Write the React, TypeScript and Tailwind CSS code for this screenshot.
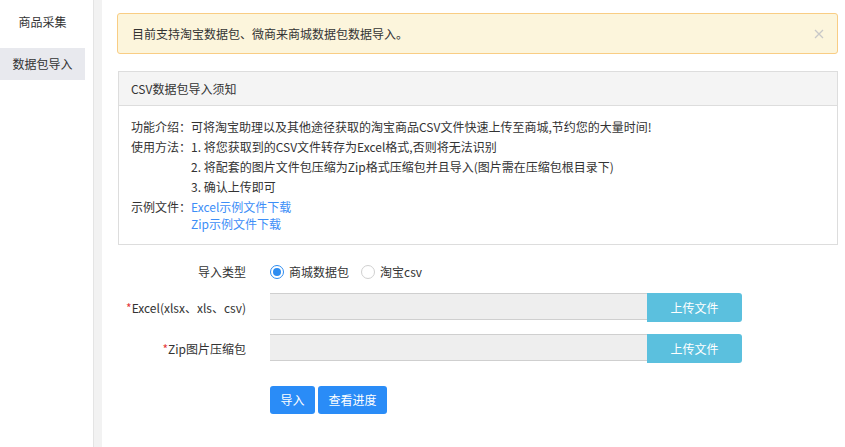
import React from "react";

export default function App() {
  const font = { fontFamily: '"Noto Sans CJK SC", "Noto Sans", sans-serif' };
  return (
    <div className="flex h-[447px] w-[845px] bg-white text-[12px] text-[#333]" style={font}>
      {/* sidebar */}
      <div className="w-[93px] shrink-0 bg-white">
        <div className="flex h-[44px] w-[85px] items-center justify-center">商品采集</div>
        <div className="mt-[4px] flex h-[32px] w-[85px] items-center justify-center bg-[#e8e9ee]">数据包导入</div>
      </div>
      <div className="w-[9px] shrink-0 border-l border-[#e4e4e4] bg-[#f2f2f2]" />
      {/* main */}
      <div className="flex-1 pl-[15px] pr-[7px] pt-[13px]">
        <div className="flex h-[41px] items-center justify-between rounded-[3px] border border-[#f9cd84] bg-[#fcf5dc] pl-[14px] pr-[13px]">
          <span>目前支持淘宝数据包、微商来商城数据包数据导入。</span>
          <svg width="10" height="10" viewBox="0 0 10 10" className="text-[#c8c8c8]">
            <path d="M1 1 L9 9 M9 1 L1 9" stroke="currentColor" strokeWidth="1.3" />
          </svg>
        </div>

        <div className="ml-[1px] mt-[17px] border border-[#ddd]">
          <div className="flex h-[34px] items-center border-b border-[#ddd] bg-[#f4f4f4] pl-[12px]">CSV数据包导入须知</div>
          <div className="pb-[12px] pl-[12px] pt-[11px] leading-[20px]">
            <div className="flex">
              <span className="w-[60px] shrink-0">功能介绍：</span>
              <span>可将淘宝助理以及其他途径获取的淘宝商品CSV文件快速上传至商城,节约您的大量时间!</span>
            </div>
            <div className="flex">
              <span className="w-[60px] shrink-0">使用方法：</span>
              <div>
                <div>1. 将您获取到的CSV文件转存为Excel格式,否则将无法识别</div>
                <div>2. 将配套的图片文件包压缩为Zip格式压缩包并且导入(图片需在压缩包根目录下)</div>
                <div>3. 确认上传即可</div>
              </div>
            </div>
            <div className="flex leading-[17px] mt-[1px]">
              <span className="w-[60px] shrink-0">示例文件：</span>
              <div className="text-[#3d8ef7]">
                <div>Excel示例文件下载</div>
                <div>Zip示例文件下载</div>
              </div>
            </div>
          </div>
        </div>

        {/* form */}
        <div className="mt-[17px] flex h-[20px] items-center">
          <div className="w-[129px] shrink-0 text-right">导入类型</div>
          <div className="ml-[24px] flex items-center">
            <span className="flex h-[14px] w-[14px] items-center justify-center rounded-full border border-[#2d8cf0] bg-white">
              <span className="h-[8px] w-[8px] rounded-full bg-[#2d8cf0]" />
            </span>
            <span className="ml-[5px]">商城数据包</span>
            <span className="ml-[12px] h-[14px] w-[14px] rounded-full border border-[#d0d0d0] bg-white" />
            <span className="ml-[5px]">淘宝csv</span>
          </div>
        </div>

        <div className="mt-[11px] flex items-start">
          <div className="flex h-[29px] w-[129px] shrink-0 items-center justify-end">
            <span className="text-[#e4393c]">*</span>Excel(xlsx、xls、csv)
          </div>
          <div className="ml-[24px] flex items-start">
            <div className="h-[27px] w-[377px] border-y border-[#cfcfcf] bg-[#eeeeee]" />
            <button className="flex h-[29px] w-[95px] items-center justify-center rounded-r-[3px] bg-[#5bc0de] text-white">上传文件</button>
          </div>
        </div>

        <div className="mt-[12px] flex items-start">
          <div className="flex h-[29px] w-[129px] shrink-0 items-center justify-end">
            <span className="text-[#e4393c]">*</span>Zip图片压缩包
          </div>
          <div className="ml-[24px] flex items-start">
            <div className="h-[27px] w-[377px] border-y border-[#cfcfcf] bg-[#eeeeee]" />
            <button className="flex h-[29px] w-[95px] items-center justify-center rounded-r-[3px] bg-[#5bc0de] text-white">上传文件</button>
          </div>
        </div>

        <div className="ml-[153px] mt-[23px] flex gap-[3px]">
          <button className="flex h-[28px] w-[45px] items-center justify-center rounded-[3px] bg-[#2a8cf7] text-white">导入</button>
          <button className="flex h-[28px] w-[69px] items-center justify-center rounded-[3px] bg-[#2a8cf7] text-white">查看进度</button>
        </div>
      </div>
    </div>
  );
}
